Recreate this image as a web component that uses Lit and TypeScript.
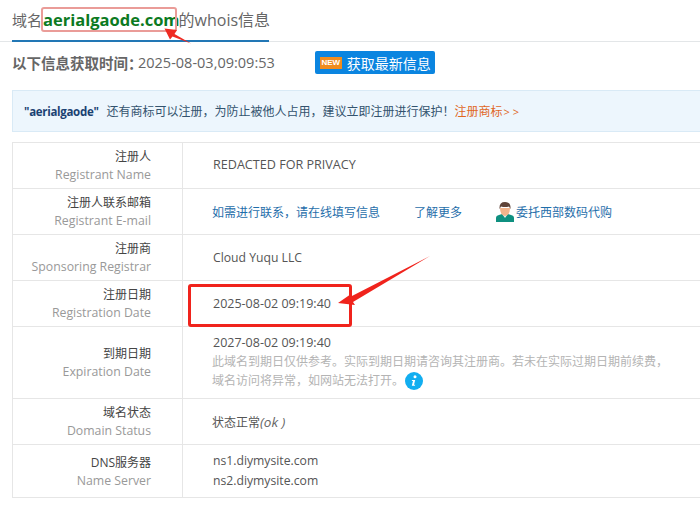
import { LitElement, html, css } from "lit";
import { customElement } from "lit/decorators.js";

const rows: [string, string, unknown, string?][] = [
  ["注册人", "Registrant Name", html`<span class="caps">REDACTED FOR PRIVACY</span>`],
  ["注册人联系邮箱", "Registrant E-mail", html`<div class="links">
    <a class="l1">如需进行联系，请在线填写信息</a><a class="l2">了解更多</a>
    <a class="agent"><svg class="person" viewBox="0 0 18 20" width="18" height="20">
      <path d="M0 20v-4q0-2.500 3-3l3-1h6l3 1q3 .500 3 3v4z" fill="#0f9080"/>
      <path d="M6.500 12.500 9 16l2.500-3.500z" fill="#e8f4f0"/>
      <path d="M4 6q0 7 5 8 5-1 5-8z" fill="#f2b48c"/>
      <path d="M3.500 7Q3 0 9 0t5.500 7L13 4.500Q9 5.500 5 4.500z" fill="#5f4338"/>
    </svg>委托西部数码代购</a></div>`],
  ["注册商", "Sponsoring Registrar", html`<span class="latin">Cloud Yuqu LLC</span>`],
  ["注册日期", "Registration Date", html`<span class="date">2025-08-02 09:19:40</span>`],
  ["到期日期", "Expiration Date", html`<div class="expiry"><span class="date">2027-08-02 09:19:40</span>
    <div class="note">此域名到期日仅供参考。实际到期日期请咨询其注册商。若未在实际过期日期前续费，</div>
    <div class="note">域名访问将异常，如网站无法打开。<svg class="info" viewBox="0 0 18 18" width="18" height="18"><circle cx="9" cy="9" r="9" fill="#12aef0"/><circle cx="10" cy="4.800" r="1.500" fill="#fff"/><path d="M7 8h3.200L9 12.800h1.200l-.3 1H6.800L8 9H6.800z" fill="#fff"/></svg></div></div>`, "tall"],
  ["域名状态", "Domain Status", html`<span>状态正常<i>(ok )</i></span>`],
  ["DNS服务器", "Name Server", html`<div class="ns latin">ns1.diymysite.com<br />ns2.diymysite.com</div>`, "last"],
];

@customElement("app-root")
export class AppRoot extends LitElement {
  static styles = css`
    :host { display: block; position: relative; width: 700px; height: 507px; overflow: hidden; background: #fff; color: #555; font-family: "Open Sans", "Noto Sans CJK SC", sans-serif; font-size: 12px; }
    .tabbar { height: 42px; box-sizing: border-box; border-bottom: 1px solid #e3e6e8; padding-left: 12px; }
    .tab { display: inline-flex; align-items: center; height: 42px; box-sizing: border-box; border-bottom: 2px solid #2277b5; font-size: 16px; color: #666; width: 257px; white-space: nowrap; padding-bottom: 2px; }
    .tab .pre { font-size: 15px; }
    .tab b { color: #0c7a22; font-size: 16.500px; font-weight: 700; margin-right: -1px; margin-left: 1px; }
    .meta { display: flex; align-items: center; height: 23px; margin-top: 9px; padding-left: 12px; font-size: 14.500px; color: #666; }
    .meta strong { font-size: 14.500px; font-weight: 700; color: #666; margin-right: -4.500px; }
    .meta .time { margin-right: 40px; }
    .btn { display: flex; align-items: center; gap: 5px; width: 120px; height: 23px; box-sizing: border-box; padding-left: 5px; background: #0b85e0; border-radius: 2px; color: #fff; font-size: 14px; white-space: nowrap; }
    .new { display: inline-flex; align-items: center; justify-content: center; width: 22px; height: 12px; background: #f08c1e; color: #fff; font: 700 8px "Liberation Sans", sans-serif; }
    .alert { display: flex; align-items: center; height: 42px; box-sizing: border-box; margin: 16px 0 10px 12px; padding-left: 11px; background: #edf6fd; border: 1px solid #d9eaf6; border-right: 0; color: #33536e; font-size: 12px; white-space: nowrap; }
    .alert b { color: #1b4272; font-weight: 700; font-size: 11.500px; letter-spacing: -.3px; margin-right: 8px; }
    .alert a { color: #e0671f; }
    .alert a span { font-size: 11px; letter-spacing: 3px; margin-left: 1px; }
    .table { margin-left: 12px; border-top: 1px solid #e6e6e6; border-left: 1px solid #e6e6e6; }
    .row { display: grid; grid-template-columns: 170px 1fr; height: 46px; box-sizing: border-box; border-bottom: 1px solid #e6e6e6; }
    .row.tall { height: 72px; }
    .row.last { height: 53px; }
    .label { display: flex; flex-direction: column; justify-content: center; align-items: flex-end; gap: 2px; padding-right: 31px; border-right: 1px solid #e6e6e6; line-height: 17px; color: #444; }
    .label small { font-size: 12.300px; color: #999; margin-top: -1px; }
    .value { display: flex; align-items: center; padding-left: 29px; font-size: 12px; color: #555; white-space: nowrap; }
    .value i { color: #666; font-style: italic; font-size: 13.500px; }
    .caps { font-size: 12.600px; margin-left: 1px; margin-top: -2px; }
    .date { font-size: 12.500px; margin-left: 1px; }
    .latin { font-size: 12.200px; margin-left: 1px; }
    .links { display: flex; align-items: center; color: #1f6eaa; }
    .l1 { width: 202px; }
    .l2 { width: 82px; }
    .agent { display: flex; align-items: center; gap: 2px; }
    .expiry { line-height: 19px; margin-top: -2px; }
    .note { color: #b4b4b4; display: flex; align-items: center; }
    .info { margin-left: 1px; margin-top: 1px; }
    .ns { line-height: 20px; }
    .overlay { position: absolute; left: 0; top: 0; pointer-events: none; }
    .mark1 { position: absolute; left: 41px; top: 7px; width: 136px; height: 25px; box-sizing: border-box; border: 2px solid #ea9c98; border-radius: 3px; }
    .mark2 { position: absolute; left: 188px; top: 284px; width: 164px; height: 43px; box-sizing: border-box; border: 3px solid #f0231c; border-radius: 3px; }
  `;

  render() {
    return html`
      <div class="tabbar"><div class="tab"><span class="pre">域名</span><b>aerialgaode.com</b>的whois信息</div></div>
      <div class="meta"><strong>以下信息获取时间：</strong><span class="time">2025-08-03,09:09:53</span>
        <div class="btn"><span class="new">NEW</span>获取最新信息</div></div>
      <div class="alert"><b>"aerialgaode"</b><span>还有商标可以注册，为防止被他人占用，建议立即注册进行保护！</span><a>注册商标<span>&gt;&gt;</span></a></div>
      <div class="table">
        ${rows.map(([cn, en, v, cls]) => html`<div class="row ${cls ?? ""}">
          <div class="label"><span>${cn}</span><small>${en}</small></div>
          <div class="value">${v}</div></div>`)}
      </div>
      <div class="mark1"></div>
      <div class="mark2"></div>
      <svg class="overlay" width="700" height="507" viewBox="0 0 700 507">
        <path d="M164.500 28.500 177 30 174.500 34 191 43.500 172.500 36.500 170 39.500z" fill="#ee2a22"/>
        <path d="M338 303 351 294 350 297 430 256 353 302 355 305z" fill="#f0231c"/>
      </svg>
    `;
  }
}
